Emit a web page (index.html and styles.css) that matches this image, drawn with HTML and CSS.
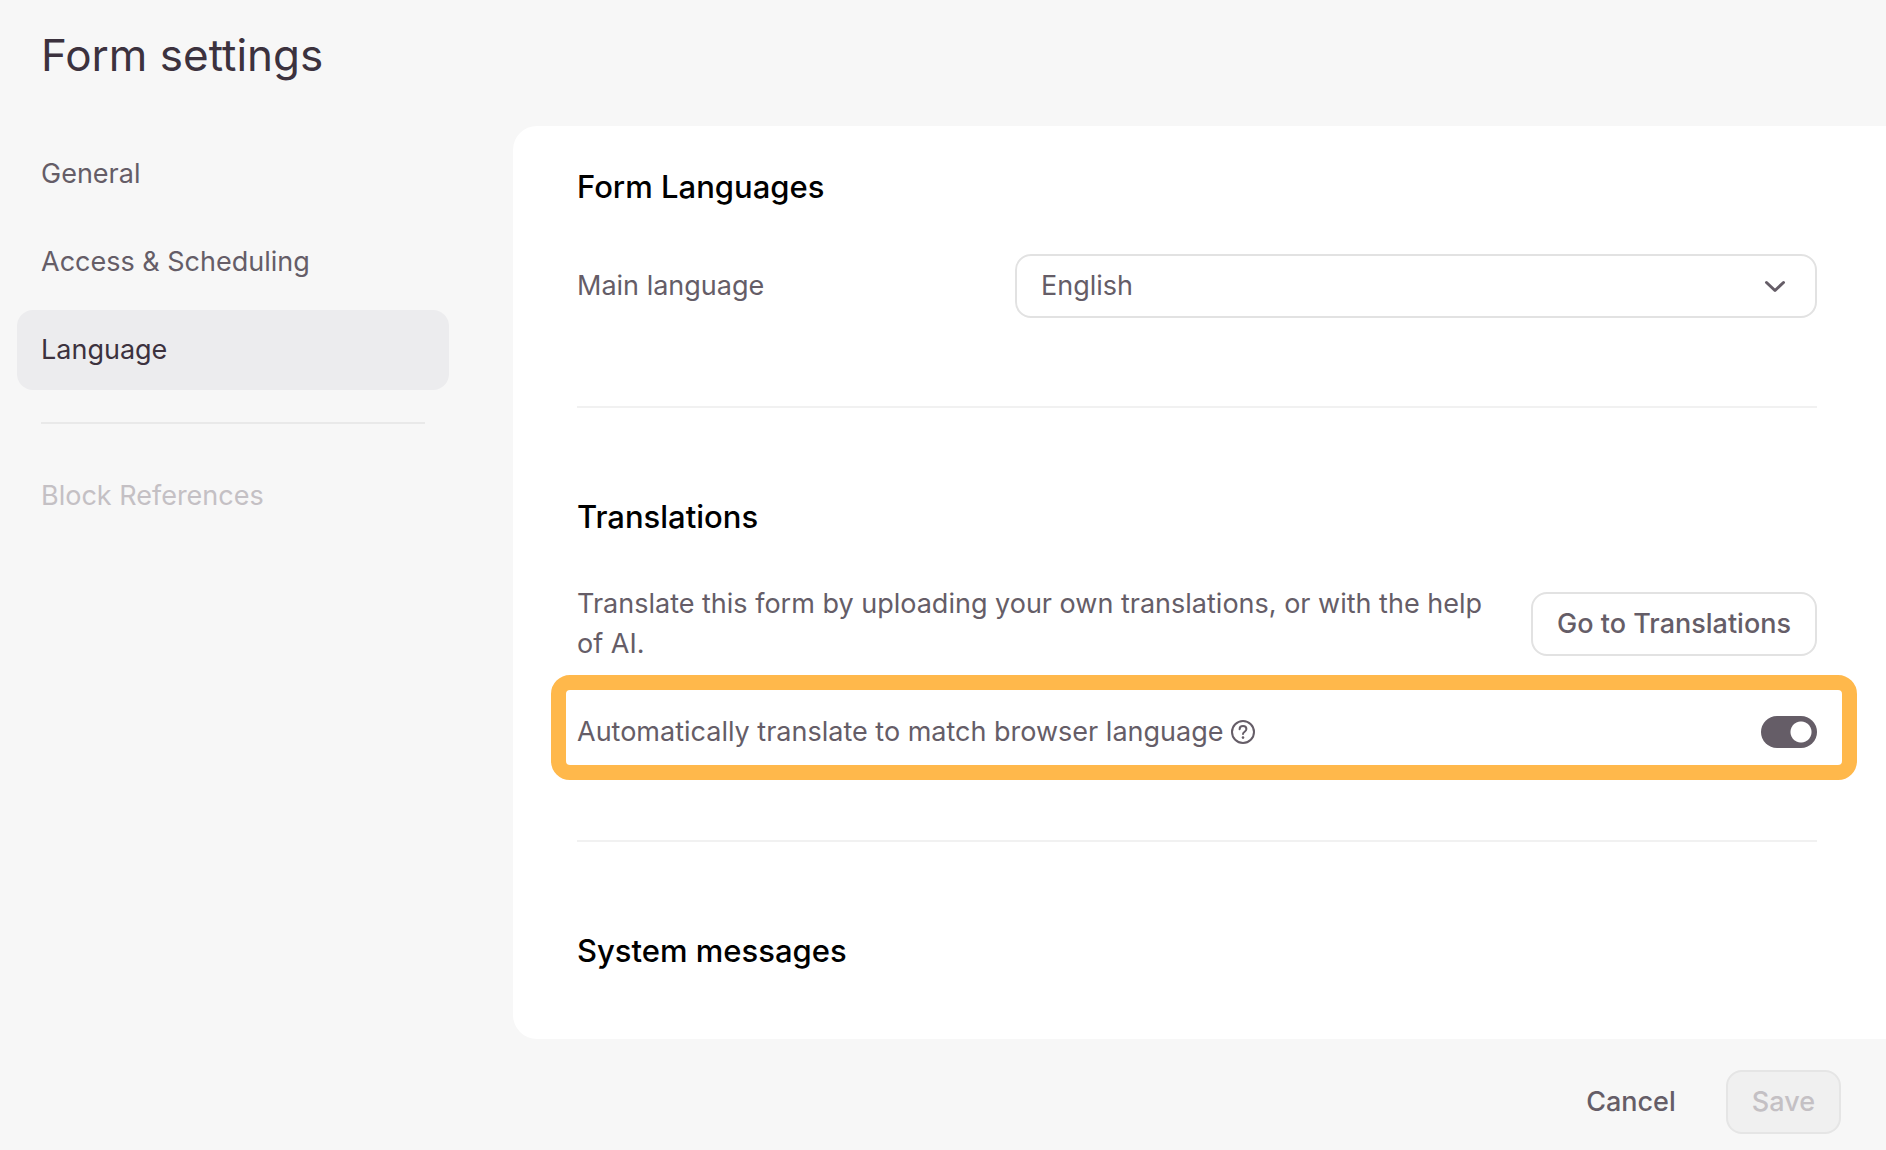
FILE: index.html
```html
<!DOCTYPE html>
<html lang="en">
<head>
<meta charset="utf-8">
<title>Form settings</title>
<link rel="stylesheet" href="styles.css">
</head>
<body>
<header class="header"><h1>Form settings</h1></header>
<div class="layout">
  <nav class="sidebar" aria-label="Settings sections">
    <a class="nav-link" href="#general">General</a>
    <a class="nav-link" href="#access">Access &amp; Scheduling</a>
    <a class="nav-link nav-link-active" href="#language" aria-current="page">Language</a>
    <hr class="nav-divider">
    <a class="nav-link nav-link-muted" href="#blocks">Block References</a>
  </nav>
  <main class="panel">
    <section class="section">
      <h2>Form Languages</h2>
      <div class="row row-language">
        <label for="main-language">Main language</label>
        <div class="select-wrap">
          <select id="main-language" class="select"><option>English</option></select>
          <svg class="chevron" viewBox="0 0 24 24" aria-hidden="true"><path d="M3.500 8.500L12 16.500l8.500-8"/></svg>
        </div>
      </div>
    </section>
    <section class="section section-translations">
      <h2>Translations</h2>
      <div class="row row-translate">
        <p>Translate this form by uploading your own translations, or with the help of AI.</p>
        <button class="button button-outline" type="button">Go to Translations</button>
      </div>
      <div class="highlight">
        <label for="auto-translate">Automatically translate to match browser language</label>
        <svg class="help" viewBox="0 0 24 24" aria-hidden="true"><circle cx="12" cy="12" r="11"/><path d="M8.600 9.200c0-1.900 1.500-3.100 3.400-3.100s3.400 1.200 3.400 3c0 2.700-3.400 2.600-3.400 5"/><circle class="dot" cx="12" cy="17.600" r="1.300"/></svg>
        <input id="auto-translate" class="toggle" type="checkbox" role="switch" checked>
      </div>
    </section>
    <section class="section section-last">
      <h2>System messages</h2>
    </section>
  </main>
</div>
<footer class="footer">
  <button class="button button-plain" type="button">Cancel</button>
  <button class="button button-save" type="button" disabled>Save</button>
</footer>
</body>
</html>
```
FILE: styles.css
```css
* { box-sizing: border-box; }
body {
  margin: 0;
  background: #f7f7f7;
  color: #655d67;
  font: 27px/40px Inter, "Liberation Sans", sans-serif;
}
h1, h2, p { margin: 0; }
h1 { color: #3c323e; font-size: 44px; font-weight: 400; line-height: 62px; }
h2 { color: #000; font-size: 31px; font-weight: 500; line-height: 40px; }
.header { padding: 24px 41px 40px; }
.layout { display: grid; grid-template-columns: 449px 1fr; column-gap: 64px; }
.sidebar { display: flex; flex-direction: column; gap: 8px; padding: 8px 0 0 17px; }
.nav-link { padding: 20px 24px; border-radius: 16px; color: inherit; text-decoration: none; }
.nav-link-active { background: #ececee; color: #3c323e; }
.nav-link-muted { color: #c4c0c4; }
.nav-divider { width: calc(100% - 48px); margin: 24px 24px; border: 0; border-top: 2px solid #e9e9e9; }
.panel { padding: 0 69px 0 64px; border-radius: 24px 0 0 24px; background: #fff; }
.section { padding: 41px 0 88px; border-bottom: 2px solid #f1f1f1; }
.section-translations { padding: 89px 0 60px; }
.section-last { padding: 89px 0 68px; border: 0; }
.row { display: grid; align-items: center; }
.row-language { grid-template-columns: 438px 1fr; margin-top: 47px; }
.row-translate { grid-template-columns: 1fr auto; column-gap: 24px; margin-top: 47px; }
.select-wrap { position: relative; }
.select {
  display: block;
  width: 100%;
  height: 64px;
  padding: 0 24px;
  border: 2px solid #e2e2e2;
  border-radius: 16px;
  background: #fff;
  color: inherit;
  font: inherit;
  appearance: none;
}
.chevron { position: absolute; top: 20px; right: 30px; width: 24px; height: 24px; fill: none; stroke: #655d67; stroke-width: 3; stroke-linecap: round; stroke-linejoin: round; pointer-events: none; }
.button { height: 64px; padding: 0 24px; border: 2px solid transparent; border-radius: 16px; background: transparent; color: inherit; font: inherit; font-weight: 500; }
.button-outline { border-color: #e2e2e2; background: #fff; }
.button-save { border-color: #e5e5e5; background: #f0f0f0; color: #c4c0c4; }
.highlight { display: flex; align-items: center; gap: 8px; margin: 11px -40px 0 -26px; padding: 22px 25px 13px 11px; border: 15px solid #ffb84b; border-radius: 19px; }
.help { width: 24px; height: 24px; fill: none; stroke: #655d67; stroke-width: 2; stroke-linecap: round; }
.dot { fill: #655d67; stroke: none; }
.toggle { width: 56px; height: 32px; margin: 0 0 0 auto; border-radius: 16px; background: radial-gradient(circle at 40px 16px, #fff 10px, #655d67 11px); appearance: none; }
.footer { display: flex; justify-content: flex-end; gap: 24px; padding: 31px 45px 16px; }
```
